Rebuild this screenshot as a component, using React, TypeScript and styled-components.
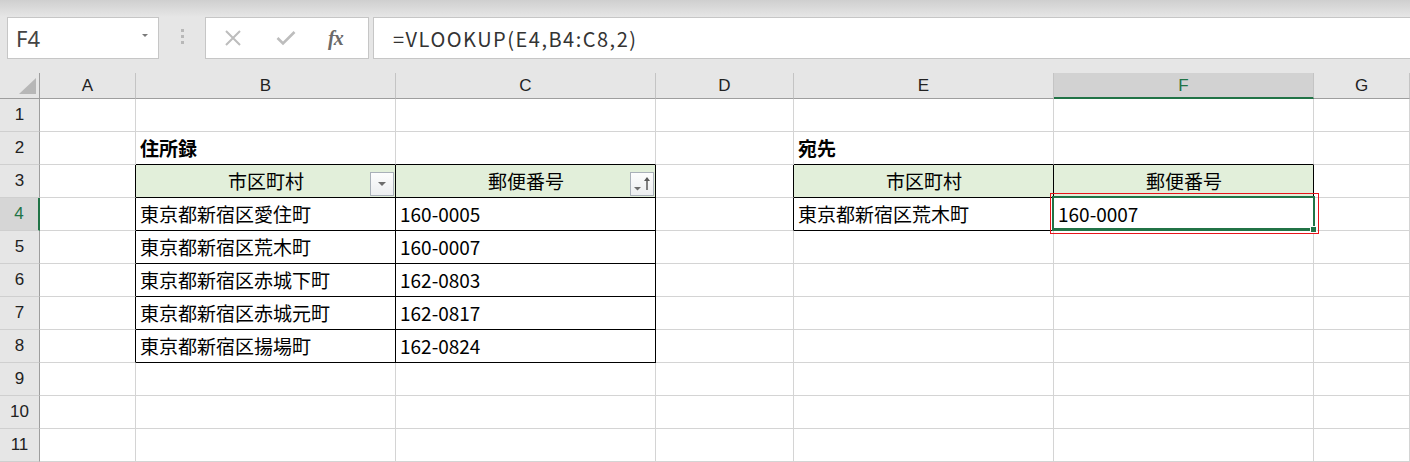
import React from 'react';
import styled, { createGlobalStyle, css } from 'styled-components';

const GlobalStyle = createGlobalStyle`
  html, body {
    margin: 0;
    padding: 0;
    background: #ffffff;
    overflow: hidden;
  }
  * {
    box-sizing: border-box;
  }
`;

const GRID = '#d4d4d4';
const BLACK = '#000000';
const GREEN = '#217346';
const CELL_FONT = `"Noto Sans CJK JP", "Noto Sans", sans-serif`;
const HEAD_FONT = `"Liberation Sans", Arial, sans-serif`;

const COLS = ['A', 'B', 'C', 'D', 'E', 'F', 'G'];
const ROWS = [1, 2, 3, 4, 5, 6, 7, 8, 9, 10, 11];

type CellData = {
  text: string;
  bold?: boolean;
  filter?: 'plain' | 'sorted';
};

const data: Record<string, CellData> = {
  B2: { text: '住所録', bold: true },
  B3: { text: '市区町村', filter: 'plain' },
  C3: { text: '郵便番号', filter: 'sorted' },
  B4: { text: '東京都新宿区愛住町' },
  C4: { text: '160-0005' },
  B5: { text: '東京都新宿区荒木町' },
  C5: { text: '160-0007' },
  B6: { text: '東京都新宿区赤城下町' },
  C6: { text: '162-0803' },
  B7: { text: '東京都新宿区赤城元町' },
  C7: { text: '162-0817' },
  B8: { text: '東京都新宿区揚場町' },
  C8: { text: '162-0824' },
  E2: { text: '宛先', bold: true },
  E3: { text: '市区町村' },
  F3: { text: '郵便番号' },
  E4: { text: '東京都新宿区荒木町' },
  F4: { text: '160-0007' },
};

const tables = [
  { c0: 1, c1: 2, r0: 3, r1: 8 },
  { c0: 4, c1: 5, r0: 3, r1: 4 },
];

const activeCol = 5;
const activeRow = 4;

/* ---------- formula bar ---------- */

const Toolbar = styled.div`
  height: 73px;
  display: flex;
  align-items: flex-start;
  padding: 17px 0 0 7px;
  background: linear-gradient(to bottom, #cfcfcf 0px, #e2e2e2 14px, #e6e6e6 17px, #e6e6e6 100%);
`;

const NameBox = styled.div`
  width: 152px;
  height: 42px;
  background: #ffffff;
  border: 1px solid #c6c6c6;
  display: flex;
  align-items: center;
  justify-content: space-between;
  padding: 0 10px 0 8px;
  font-family: "Noto Sans", "Liberation Sans", sans-serif;
  font-size: 22px;
  color: #444444;
`;

const SmallCaret = styled.span`
  width: 0;
  height: 0;
  border-left: 3px solid transparent;
  border-right: 3px solid transparent;
  border-top: 3px solid #7a7a7a;
  margin-bottom: 6px;
`;

const Grip = styled.div`
  width: 46px;
  height: 42px;
  display: flex;
  flex-direction: column;
  align-items: center;
  justify-content: center;
  gap: 3px;
  padding-bottom: 4px;

  span {
    width: 3px;
    height: 3px;
    background: #b8b8b8;
  }
`;

const ButtonBox = styled.div`
  width: 164px;
  height: 42px;
  background: #ffffff;
  border: 1px solid #c6c6c6;
  display: flex;
  align-items: center;
  padding-left: 18px;
  gap: 34px;
`;

const FxLabel = styled.span`
  font-family: "Liberation Serif", "DejaVu Serif", serif;
  font-style: italic;
  font-weight: bold;
  font-size: 20px;
  color: #6a6a6a;
  letter-spacing: -1px;
  margin-left: -2px;
`;

const FormulaInput = styled.div`
  flex: 1;
  height: 42px;
  margin-left: 4px;
  background: #ffffff;
  border: 1px solid #c6c6c6;
  border-right: none;
  display: flex;
  align-items: center;
  padding-left: 19px;
  font-family: ${CELL_FONT};
  font-size: 20px;
  letter-spacing: 1.5px;
  color: #333333;
  white-space: nowrap;
`;

/* ---------- sheet ---------- */

const Sheet = styled.div`
  display: grid;
  grid-template-columns: 40px 96px 260px 260px 138px 260px 260px 1fr;
  grid-template-rows: 26px repeat(11, 33px);
  background: #ffffff;
`;

const Corner = styled.div`
  position: relative;
  background: #e6e6e6;
  border-right: 1px solid #9e9e9e;
  border-bottom: 1px solid #9e9e9e;
`;

const ColHead = styled.div<{ $active?: boolean }>`
  display: flex;
  align-items: center;
  justify-content: center;
  font-family: ${HEAD_FONT};
  font-size: 17px;
  color: #222222;
  background: #e6e6e6;
  border-right: 1px solid #c4c4c4;
  border-bottom: 1px solid #9e9e9e;
  padding-top: 1px;

  ${({ $active }) =>
    $active &&
    css`
      background: #d2d2d2;
      color: ${GREEN};
      border-bottom: 2px solid ${GREEN};
    `}
`;

const RowHead = styled.div<{ $active?: boolean }>`
  display: flex;
  align-items: center;
  justify-content: center;
  font-family: ${HEAD_FONT};
  font-size: 17px;
  color: #222222;
  background: #e6e6e6;
  border-right: 1px solid #9e9e9e;
  border-bottom: 1px solid #cfcfcf;

  ${({ $active }) =>
    $active &&
    css`
      background: #d6d6d6;
      color: ${GREEN};
      border-right: 2px solid ${GREEN};
    `}
`;

const Cell = styled.div<{
  $right: string;
  $bottom: string;
  $head?: boolean;
  $bold?: boolean;
  $selected?: boolean;
}>`
  position: relative;
  display: flex;
  align-items: center;
  padding: 0 3px 1px 4px;
  font-family: ${CELL_FONT};
  font-size: 19px;
  color: #000000;
  white-space: nowrap;
  border-right: 1px solid ${({ $right }) => $right};
  border-bottom: 1px solid ${({ $bottom }) => $bottom};
  font-weight: ${({ $bold }) => ($bold ? 700 : 400)};
  z-index: ${({ $selected }) => ($selected ? 2 : 'auto')};

  ${({ $head }) =>
    $head &&
    css`
      justify-content: center;
      background: #e2efda;
    `}
`;

const FilterButton = styled.div`
  position: absolute;
  right: 1px;
  bottom: 1px;
  width: 24px;
  height: 24px;
  border: 1px solid #a9b0b8;
  background: linear-gradient(to bottom, #fdfdfd, #eceef0);
  display: flex;
  align-items: center;
  justify-content: center;
`;

const Selection = styled.div`
  position: absolute;
  top: -2px;
  left: -2px;
  right: -2px;
  bottom: -1px;
  border: 2px solid ${GREEN};
  border-bottom-width: 3px;
  pointer-events: none;
`;

const FillHandle = styled.span`
  position: absolute;
  right: -4px;
  bottom: -5px;
  width: 7px;
  height: 7px;
  background: ${GREEN};
  border: 1px solid #ffffff;
`;

const Annotation = styled.div`
  position: absolute;
  top: -5px;
  left: -4px;
  right: -6px;
  bottom: -4px;
  border: 1.5px solid #e8141b;
  pointer-events: none;
`;

const CornerTriangle = () => (
  <svg width="40" height="26" viewBox="0 0 40 26" style={{ position: 'absolute', left: 0, top: 0 }}>
    <polygon points="36,5 36,21 19,21" fill="#b7b7b7" />
  </svg>
);

const FilterIcon = ({ sorted }: { sorted?: boolean }) =>
  sorted ? (
    <svg width="22" height="22" viewBox="0 0 22 22">
      <polygon points="3,14 10,14 6.5,17.5" fill="#6d6d6d" />
      <line x1="16" y1="5" x2="16" y2="17" stroke="#5a5a5a" strokeWidth="1.5" />
      <polygon points="13,8 19,8 16,4" fill="#5a5a5a" />
    </svg>
  ) : (
    <svg width="22" height="22" viewBox="0 0 22 22">
      <polygon points="7,9 15,9 11,13" fill="#6d6d6d" />
    </svg>
  );

const CancelIcon = () => (
  <svg width="18" height="16" viewBox="0 0 18 16">
    <path d="M2 1 L16 15 M16 1 L2 15" stroke="#bdbdbd" strokeWidth="2" fill="none" />
  </svg>
);

const EnterIcon = () => (
  <svg width="20" height="16" viewBox="0 0 20 16">
    <path d="M1.5 8 L7 13.5 L18.5 2" stroke="#bdbdbd" strokeWidth="2.6" fill="none" />
  </svg>
);

function tableEdges(r: number, c: number) {
  let right = GRID;
  let bottom = GRID;
  for (const t of tables) {
    if (c >= t.c0 && c <= t.c1 && r >= t.r0 - 1 && r <= t.r1) bottom = BLACK;
    if (r >= t.r0 && r <= t.r1 && c >= t.c0 - 1 && c <= t.c1) right = BLACK;
  }
  const head = tables.some((t) => r === t.r0 && c >= t.c0 && c <= t.c1);
  return { right, bottom, head };
}

export default function App() {
  return (
    <>
      <GlobalStyle />
      <Toolbar>
        <NameBox>
          F4
          <SmallCaret />
        </NameBox>
        <Grip>
          <span />
          <span />
          <span />
        </Grip>
        <ButtonBox>
          <CancelIcon />
          <EnterIcon />
          <FxLabel>fx</FxLabel>
        </ButtonBox>
        <FormulaInput>=VLOOKUP(E4,B4:C8,2)</FormulaInput>
      </Toolbar>

      <Sheet>
        <Corner>
          <CornerTriangle />
        </Corner>
        {COLS.map((c, i) => (
          <ColHead key={c} $active={i === activeCol}>
            {c}
          </ColHead>
        ))}

        {ROWS.map((r) => (
          <React.Fragment key={r}>
            <RowHead $active={r === activeRow}>{r}</RowHead>
            {COLS.map((col, ci) => {
              const d = data[`${col}${r}`];
              const { right, bottom, head } = tableEdges(r, ci);
              const selected = ci === activeCol && r === activeRow;
              return (
                <Cell
                  key={col}
                  $right={right}
                  $bottom={bottom}
                  $head={head}
                  $bold={d?.bold}
                  $selected={selected}
                >
                  {d?.text}
                  {d?.filter && (
                    <FilterButton>
                      <FilterIcon sorted={d.filter === 'sorted'} />
                    </FilterButton>
                  )}
                  {selected && (
                    <>
                      <Selection>
                        <FillHandle />
                      </Selection>
                      <Annotation />
                    </>
                  )}
                </Cell>
              );
            })}
          </React.Fragment>
        ))}
      </Sheet>
    </>
  );
}
